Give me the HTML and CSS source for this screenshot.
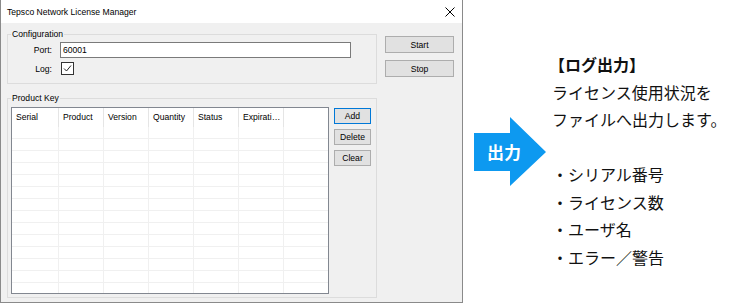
FILE: index.html
```html
<!DOCTYPE html>
<html lang="ja">
<head>
<meta charset="UTF-8">
<meta name="viewport" content="width=device-width, initial-scale=1.0">
<title>Tepsco Network License Manager</title>
<link rel="stylesheet" href="styles.css">
</head>
<body>
<div class="page">
<div class="window">
<div class="titlebar">
<span class="title">Tepsco Network License Manager</span>
<svg class="close" width="10" height="10" viewBox="0 0 10 10"><path d="M0.5 0.5 L9.5 9.5 M9.5 0.5 L0.5 9.5" stroke="#000" stroke-width="1" fill="none"/></svg>
</div>
<div class="client">
<div class="groups">
<fieldset class="group config">
<legend>Configuration</legend>
<div class="field">
<label class="field-label" for="port">Port:</label>
<input class="text-input" id="port" type="text" value="60001">
</div>
<div class="field">
<span class="field-label">Log:</span>
<span class="checkbox"><svg width="13" height="13" viewBox="0 0 13 13"><rect x="0.5" y="0.5" width="12" height="12" fill="#fff" stroke="#333"/><path d="M3 6.5 L5.5 9 L10 3.5" fill="none" stroke="#222" stroke-width="1"/></svg></span>
</div>
</fieldset>
<fieldset class="group product">
<legend>Product Key</legend>
<div class="listview">
<div class="lv-head">
<div class="cell c1">Serial</div>
<div class="cell">Product</div>
<div class="cell">Version</div>
<div class="cell">Quantity</div>
<div class="cell">Status</div>
<div class="cell">Expirati…</div>
<div class="cell last"></div>
</div>
<div class="lv-body" id="rows"></div>
</div>
<div class="side-buttons">
<button class="btn btn-default">Add</button>
<button class="btn">Delete</button>
<button class="btn">Clear</button>
</div>
</fieldset>
</div>
<div class="main-buttons">
<button class="btn btn-wide">Start</button>
<button class="btn btn-wide">Stop</button>
</div>
</div>
</div>
<div class="note">
<div class="arrow">出力</div>
<div class="note-text">
<p class="note-title">【ログ出力】</p>
<p>ライセンス使用状況を</p>
<p>ファイルへ出力します。</p>
<div class="note-list">
<p>・シリアル番号</p>
<p>・ライセンス数</p>
<p>・ユーザ名</p>
<p>・エラー／警告</p>
</div>
</div>
</div>
</div>
<script>
const rows = document.getElementById('rows');
for (let i = 0; i < 14; i++) {
const row = document.createElement('div');
row.className = 'lv-row';
for (let j = 0; j < 7; j++) {
const cell = document.createElement('div');
cell.className = 'cell' + (j === 0 ? ' c1' : '') + (j === 6 ? ' last' : '');
row.appendChild(cell);
}
rows.appendChild(row);
}
</script>
</body>
</html>
```

FILE: styles.css
```css
body {
margin: 0;
background-color: #fff;
font-family: 'Liberation Sans', Arial, sans-serif;
}
.page {
display: flex;
width: 730px;
height: 304px;
}
.window {
width: 463px;
height: 303px;
box-sizing: border-box;
border: 1px solid #8a8a8a;
border-top: none;
background-color: #f0f0f0;
display: flex;
flex-direction: column;
font-size: 8.6px;
color: #000;
}
.titlebar {
height: 23px;
flex-shrink: 0;
background-color: #fff;
display: flex;
align-items: center;
justify-content: space-between;
padding: 0 7px 0 6px;
}
.close {
display: block;
}
.client {
flex: 1;
display: flex;
padding: 0 0 4px 6px;
}
.groups {
width: 370px;
display: flex;
flex-direction: column;
}
.group {
margin: 0;
min-width: 0;
box-sizing: border-box;
border: 1px solid #dcdcdc;
}
.group legend {
padding: 0 1px;
line-height: 12px;
}
.config {
margin-top: 5px;
height: 56px;
padding: 2px 3px 0 3px;
}
.product {
margin-top: 8px;
flex: 1;
display: flex;
align-items: flex-start;
padding: 3px 3px 3px 3px;
}
.field {
display: flex;
align-items: center;
margin-bottom: 4px;
}
.field-label {
width: 41px;
text-align: right;
margin-right: 8px;
}
.text-input {
width: 291px;
height: 16px;
box-sizing: border-box;
border: 1px solid #7a7a7a;
padding: 0 2px;
margin: 0;
font-family: inherit;
font-size: 8.6px;
background-color: #fff;
outline: none;
}
.checkbox {
margin-left: 1px;
width: 13px;
height: 13px;
}
.checkbox svg {
display: block;
}
.listview {
width: 318px;
height: 187px;
box-sizing: border-box;
border: 1px solid #828790;
background-color: #fff;
overflow: hidden;
}
.lv-head,
.lv-row {
display: flex;
}
.lv-head {
height: 19px;
}
.lv-row {
height: 12px;
box-sizing: border-box;
border-bottom: 1px solid #f0f0f0;
}
.cell {
width: 45px;
flex-shrink: 0;
box-sizing: border-box;
border-right: 1px solid #f0f0f0;
padding-left: 4px;
white-space: nowrap;
overflow: hidden;
}
.lv-head .cell {
border-right-color: #e5e5e5;
line-height: 19px;
}
.cell.c1 {
width: 47px;
}
.cell.last {
flex: 1;
border-right: none;
}
.btn {
box-sizing: border-box;
border: 1px solid #adadad;
background-color: #e1e1e1;
font-family: inherit;
font-size: 8.6px;
color: #000;
padding: 0;
margin: 0;
cursor: pointer;
}
.btn-default {
border-color: #0078d7;
}
.side-buttons {
margin-left: 5px;
padding-top: 1px;
display: flex;
flex-direction: column;
gap: 5px;
}
.side-buttons .btn {
width: 37px;
height: 16px;
}
.main-buttons {
margin-left: 8px;
padding-top: 13px;
display: flex;
flex-direction: column;
gap: 7px;
}
.btn-wide {
width: 69px;
height: 17px;
}
.note {
flex: 1;
display: flex;
align-items: flex-start;
padding-left: 11px;
font-family: 'Noto Sans CJK JP', sans-serif;
color: #111;
}
.arrow {
width: 72px;
height: 69px;
margin-top: 117px;
box-sizing: border-box;
padding-left: 13px;
display: flex;
align-items: center;
background-color: #0d99f0;
clip-path: polygon(0 16px, 36px 16px, 36px 0, 72px 35px, 36px 69px, 36px 54px, 0 54px);
color: #fff;
font-size: 17px;
font-weight: bold;
}
.note-text {
margin-left: 6px;
padding-top: 51px;
font-size: 16px;
line-height: 27.5px;
}
.note-text p {
margin: 0;
white-space: nowrap;
}
.note-title {
font-weight: bold;
margin-left: -3px !important;
}
.note-list {
margin-top: 27.5px;
}
```
